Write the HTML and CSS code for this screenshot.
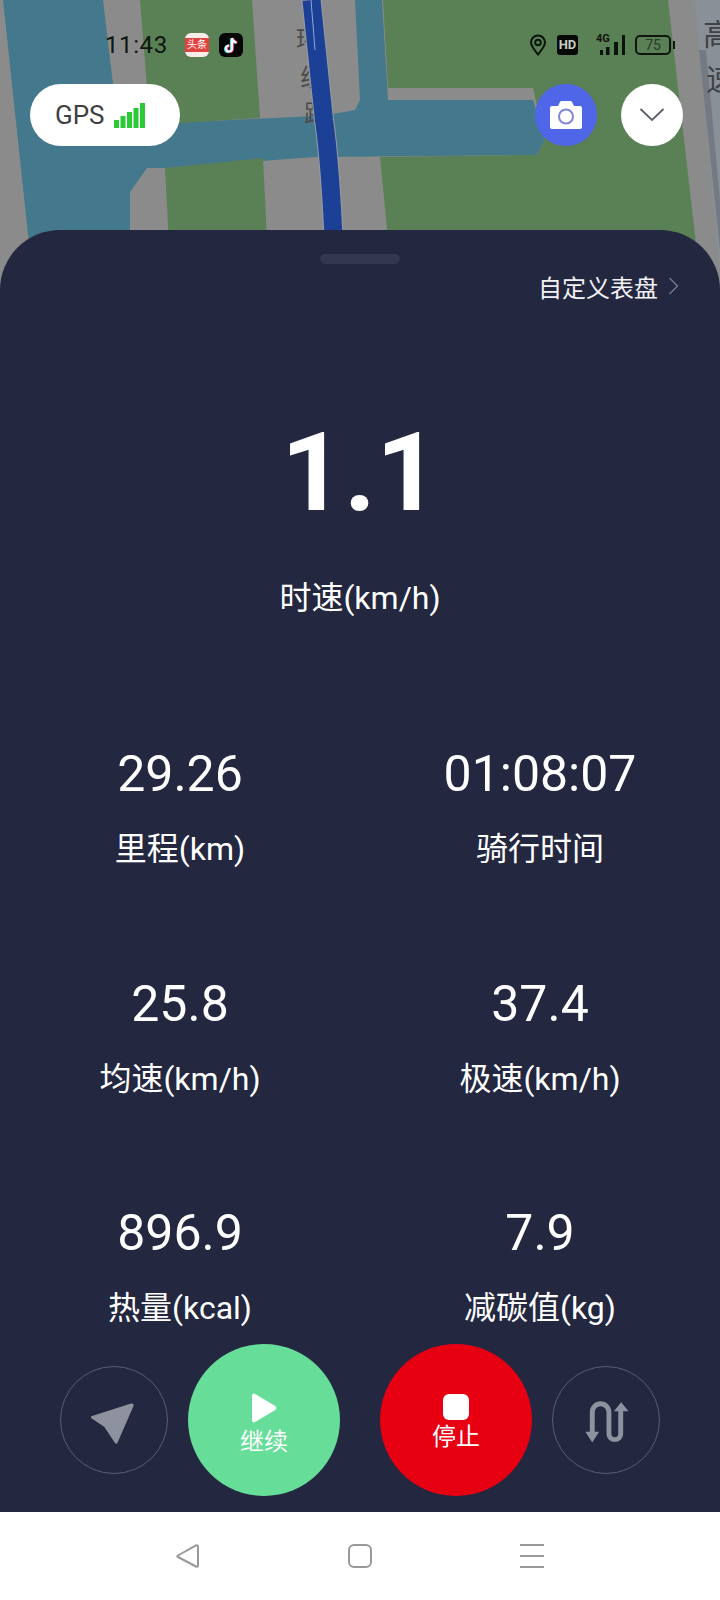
FILE: index.html
```html
<!DOCTYPE html>
<html>
<head>
<meta charset="utf-8">
<link rel="stylesheet" href="styles.css">
<title>骑行</title>
</head>
<body>
<div class="map">
  <svg class="map-art" width="720" height="300" viewBox="0 0 720 300">
    <rect width="720" height="300" fill="#8b8b8b"/>
    <polygon points="3,0 103,0 113,84 150,124 315,116 345,112 355,110 360,100 355,0 382,0 388,100 533,100 545,140 537,155 315,157 165,168 147,168 130,192 130,300 35,300" fill="#44788c"/>
    <polygon points="140,0 252,0 260,118 150,125" fill="#5a8056"/>
    <polygon points="165,168 263,158 270,300 172,300" fill="#5a8056"/>
    <polygon points="383,0 668,0 695,235 702,300 394,300 380,157 537,155 545,140 533,88 388,88" fill="#5a8056"/>
    <polygon points="695,0 720,0 720,270" fill="#8a9098"/>
    <polygon points="699,50 706,50 720,200 720,250" fill="#737a84"/>
    <text class="map-label" x="296" y="48">环</text>
    <text class="map-label" x="300" y="86">线</text>
    <text class="map-label" x="304" y="122">路</text>
    <text class="map-label map-label-big" x="703" y="45">高</text>
    <text class="map-label map-label-big" x="706" y="90">速</text>
    <path d="M311.500 0L324 120Q332 175 336 300" fill="none" stroke="#979ba0" stroke-width="20"/>
    <path d="M311.500 0L324 120Q332 175 336 300" fill="none" stroke="#1b4095" stroke-width="18"/>
    <polyline points="311,0 315,50" stroke="#8fa8d8" stroke-width="1" fill="none"/>
  </svg>

  <div class="status">
    <span class="time">11:43</span>
    <span class="app-toutiao"><span class="app-toutiao-band">头条</span></span>
    <svg class="app-douyin" width="24" height="24" viewBox="0 0 24 24">
      <rect width="24" height="24" rx="6" fill="#060608"/>
      <path d="M13 5v10.500a3 3 0 1 1-3-3M13 5c.4 2.600 2 4 4.500 4.300" fill="none" stroke="#2be6ee" stroke-width="2.600" transform="translate(-.8 .5)"/>
      <path d="M13 5v10.500a3 3 0 1 1-3-3M13 5c.4 2.600 2 4 4.500 4.300" fill="none" stroke="#f0305a" stroke-width="2.600" transform="translate(.8 .2)"/>
      <path d="M13 5v10.500a3 3 0 1 1-3-3M13 5c.4 2.600 2 4 4.500 4.300" fill="none" stroke="#fff" stroke-width="2.200"/>
    </svg>
    <span class="status-right">
      <svg width="18" height="22" viewBox="0 0 18 22">
        <path d="M9 20.500C5 15.500 2 12 2 8.500a7 7 0 0 1 14 0C16 12 13 15.500 9 20.500z" fill="none" stroke="#0b140b" stroke-width="2"/>
        <circle cx="9" cy="8.500" r="2.800" fill="none" stroke="#0b140b" stroke-width="2"/>
      </svg>
      <span class="hd">HD</span>
      <span class="signal">
        <span class="signal-4g">4G</span>
        <svg width="30" height="20" viewBox="0 0 30 20">
          <rect x="4" y="15" width="3" height="5" fill="#0b140b"/>
          <rect x="10" y="12" width="3.500" height="8" fill="#0b140b"/>
          <rect x="18" y="7" width="4" height="13" fill="#0b140b"/>
          <rect x="26" y="0" width="3" height="20" fill="#0b140b"/>
        </svg>
      </span>
      <span class="battery">75</span>
    </span>
  </div>

  <div class="gps">
    <span>GPS</span>
    <svg width="31" height="25" viewBox="0 0 31 25">
      <rect x="0" y="17" width="5" height="8" fill="#2bc936"/>
      <rect x="6.500" y="13" width="5" height="12" fill="#2bc936"/>
      <rect x="13" y="9" width="5" height="16" fill="#2bc936"/>
      <rect x="19.500" y="5" width="5" height="20" fill="#2bc936"/>
      <rect x="26" y="0" width="5" height="25" fill="#2bc936"/>
    </svg>
  </div>

  <div class="map-btn map-btn-camera">
    <svg width="34" height="30" viewBox="0 0 34 30">
      <path d="M3 6h6l2-4c.3-.6.8-1 1.500-1h9c.7 0 1.200.4 1.500 1l2 4h6a2 2 0 0 1 2 2v19a2 2 0 0 1-2 2H3a2 2 0 0 1-2-2V8a2 2 0 0 1 2-2z" fill="#fff"/>
      <circle cx="17" cy="16.500" r="7" fill="none" stroke="#7f86d8" stroke-width="2"/>
    </svg>
  </div>
  <div class="map-btn map-btn-down">
    <svg width="26" height="16" viewBox="0 0 26 16">
      <path d="M1.500 2L13 13 24.500 2" fill="none" stroke="#5c606c" stroke-width="1.800"/>
    </svg>
  </div>
</div>

<div class="sheet">
  <div class="handle"></div>
  <div class="custom">
    <span>自定义表盘</span>
    <svg width="12" height="20" viewBox="0 0 12 20">
      <path d="M1.500 2l8 8-8 8" fill="none" stroke="#7b7e8e" stroke-width="1.300"/>
    </svg>
  </div>

  <div class="hero-value">1.1</div>
  <div class="hero-label">时速(km/h)</div>

  <div class="stats">
    <div class="stat"><div class="stat-value">29.26</div><div class="stat-label">里程(km)</div></div>
    <div class="stat"><div class="stat-value">01:08:07</div><div class="stat-label">骑行时间</div></div>
    <div class="stat"><div class="stat-value">25.8</div><div class="stat-label">均速(km/h)</div></div>
    <div class="stat"><div class="stat-value">37.4</div><div class="stat-label">极速(km/h)</div></div>
    <div class="stat"><div class="stat-value">896.9</div><div class="stat-label">热量(kcal)</div></div>
    <div class="stat"><div class="stat-value">7.9</div><div class="stat-label">减碳值(kg)</div></div>
  </div>

  <div class="actions">
    <div class="side-btn">
      <svg width="60" height="60" viewBox="0 0 60 60">
        <path d="M47 13.500L8 26c-1.300.5-1.400 2-.2 2.600L19 36c1 .5 1.500 1 2 2l10 15c.8 1.200 2 1 2.500-.3L49.500 16c.6-1.800-.8-3-2.500-2.500z" fill="#8e919e"/>
      </svg>
    </div>
    <div class="main-btn main-btn-go">
      <svg class="play-icon" width="26" height="30" viewBox="0 0 26 30">
        <path d="M1 3v24c0 2 1.500 3 3.200 2l20-12c1.500-1 1.500-3 0-4L4.200 1C2.500 0 1 1 1 3z" fill="#fff"/>
      </svg>
      <span class="main-btn-text">继续</span>
    </div>
    <div class="main-btn main-btn-stop">
      <span class="stop-square"></span>
      <span class="main-btn-text">停止</span>
    </div>
    <div class="side-btn">
      <svg width="108" height="108" viewBox="0 0 108 108">
        <path d="M40 68V46a8.500 8.500 0 0 1 17 0v22a6 6 0 0 0 12 0V42" fill="none" stroke="#8e919e" stroke-width="5"/>
        <path d="M33 66h14l-7 11zM62 45l7.500-9 7.500 9z" fill="#8e919e"/>
      </svg>
    </div>
  </div>
</div>

<div class="navbar">
  <svg width="24" height="24" viewBox="0 0 24 24">
    <path d="M2 11.500L20 1.500c1-.5 2 0 2 1v19c0 1-1 1.500-2 1L2 13c-1-.5-1-1 0-1.500z" fill="none" stroke="#999" stroke-width="2"/>
  </svg>
  <svg width="24" height="24" viewBox="0 0 24 24">
    <rect x="1" y="1" width="22" height="22" rx="5" fill="none" stroke="#999" stroke-width="2"/>
  </svg>
  <svg width="24" height="24" viewBox="0 0 24 24">
    <path d="M0 1h24M0 12h24M0 23h24" stroke="#999" stroke-width="2"/>
  </svg>
</div>
</body>
</html>
```

FILE: styles.css
```css
html, body {
  margin: 0;
  padding: 0;
}

body {
  width: 720px;
  background: #fff;
  color: #fff;
  font-family: Roboto, "Noto Sans CJK SC", sans-serif;
}

/* map */
.map {
  position: relative;
  height: 300px;
  overflow: hidden;
}
.map-art {
  display: block;
}
.map-label {
  font-size: 24px;
  fill: #4c4c4c;
  font-family: "Noto Sans CJK SC", sans-serif;
}
.map-label-big {
  font-size: 30px;
  fill: #3f4246;
}

/* status bar sits on top of the map */
.status {
  position: absolute;
  top: 32px;
  left: 105px;
  right: 49px;
  height: 26px;
  display: flex;
  align-items: center;
  color: #10160f;
}
.time {
  font-size: 24px;
  letter-spacing: .6px;
  width: 80px;
}
.app-toutiao {
  width: 24px;
  height: 24px;
  border-radius: 6px;
  background: #f6ecea;
  display: flex;
  align-items: center;
  justify-content: center;
}
.app-toutiao-band {
  width: 24px;
  height: 14px;
  background: #e2423f;
  color: #fff;
  font-size: 10px;
  line-height: 14px;
  text-align: center;
}
.app-douyin {
  margin-left: 10px;
}
.status-right {
  margin-left: auto;
  display: flex;
  align-items: center;
}
.hd {
  margin-left: 10px;
  width: 21px;
  height: 20px;
  background: #050805;
  border-radius: 3px;
  color: #c8d0c6;
  font-size: 13px;
  font-weight: 700;
  line-height: 20px;
  text-align: center;
}
.signal {
  position: relative;
  margin-left: 18px;
  height: 20px;
}
.signal svg {
  display: block;
}
.signal-4g {
  position: absolute;
  left: 0;
  top: -2px;
  font-size: 11px;
  font-weight: 700;
  line-height: 12px;
}
.battery {
  margin-left: 9px;
  width: 32px;
  height: 16px;
  border: 2.500px solid #10160f;
  border-radius: 5px;
  color: #2a3a28;
  font-size: 14px;
  line-height: 16px;
  text-align: center;
  position: relative;
}
.battery:after {
  content: "";
  position: absolute;
  right: -6px;
  top: 4px;
  width: 2.500px;
  height: 8px;
  background: #10160f;
}

.gps {
  position: absolute;
  left: 30px;
  top: 84px;
  width: 150px;
  height: 62px;
  box-sizing: border-box;
  padding-left: 25px;
  border-radius: 31px;
  background: #fff;
  color: #3f3f3f;
  font-size: 26px;
  display: flex;
  align-items: center;
  gap: 9px;
}
.map-btn {
  position: absolute;
  top: 84px;
  width: 62px;
  height: 62px;
  border-radius: 50%;
  display: flex;
  align-items: center;
  justify-content: center;
}
.map-btn-camera {
  left: 535px;
  background: #4f66e8;
}
.map-btn-down {
  left: 621px;
  background: #fff;
}

/* bottom sheet */
.sheet {
  position: relative;
  margin-top: -70px;
  height: 1282px;
  box-sizing: border-box;
  padding-top: 24px;
  border-radius: 60px 60px 0 0;
  background: #23273f;
}
.handle {
  width: 80px;
  height: 10px;
  margin: 0 auto;
  border-radius: 5px;
  background: #34384f;
}
.custom {
  margin-top: 6px;
  padding-right: 40px;
  height: 32px;
  display: flex;
  justify-content: flex-end;
  align-items: center;
  gap: 10px;
  font-size: 24px;
  color: #f2f2f4;
}
.hero-value {
  margin-top: 111px;
  height: 120px;
  line-height: 120px;
  text-align: center;
  font-size: 110px;
  font-weight: 700;
}
.hero-label {
  margin-top: 45px;
  line-height: 40px;
  text-align: center;
  font-size: 32px;
}
.stats {
  margin-top: 126px;
  display: grid;
  grid-template-columns: 360px 360px;
  row-gap: 104.500px;
  text-align: center;
}
.stat-value {
  height: 60px;
  line-height: 60px;
  font-size: 50px;
}
.stat-label {
  margin-top: 25px;
  line-height: 40px;
  font-size: 32px;
}

.actions {
  margin-top: 16px;
  display: flex;
  justify-content: center;
  align-items: center;
}
.side-btn {
  width: 108px;
  height: 108px;
  box-sizing: border-box;
  border: 1.500px solid #5a5e74;
  border-radius: 50%;
  display: flex;
  align-items: center;
  justify-content: center;
}
.main-btn {
  width: 152px;
  height: 152px;
  box-sizing: border-box;
  margin: 0 20px;
  border-radius: 50%;
  display: flex;
  flex-direction: column;
  align-items: center;
  justify-content: center;
}
.main-btn-go {
  background: #66dd98;
  padding-top: 12px;
}
.main-btn-stop {
  background: #e60012;
  padding-top: 8px;
}
.main-btn-text {
  font-size: 24px;
  line-height: 34px;
}
.play-icon {
  margin-bottom: 2px;
}
.stop-square {
  width: 26px;
  height: 26px;
  border-radius: 6px;
  background: #fff;
}

.navbar {
  height: 88px;
  box-sizing: border-box;
  padding: 32px 176px 0;
  display: flex;
  justify-content: space-between;
  align-items: flex-start;
  background: #fff;
}
```
